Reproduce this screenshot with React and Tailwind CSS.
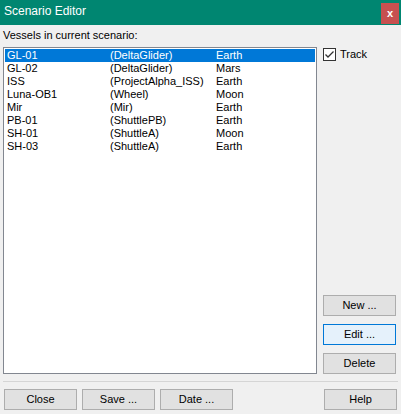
import React from "react";

const vessels = [
  ["GL-01", "(DeltaGlider)", "Earth"],
  ["GL-02", "(DeltaGlider)", "Mars"],
  ["ISS", "(ProjectAlpha_ISS)", "Earth"],
  ["Luna-OB1", "(Wheel)", "Moon"],
  ["Mir", "(Mir)", "Earth"],
  ["PB-01", "(ShuttlePB)", "Earth"],
  ["SH-01", "(ShuttleA)", "Moon"],
  ["SH-03", "(ShuttleA)", "Earth"],
];

function Btn({ children, focused = false, className = "" }) {
  return (
    <button
      className={`h-[21px] w-[73px] border text-[11px] text-black leading-none ${
        focused ? "bg-[#e5f1fb] border-[#0078d7]" : "bg-[#e1e1e1] border-[#adadad]"
      } ${className}`}
    >
      {children}
    </button>
  );
}

export default function App() {
  return (
    <div
      className="w-[401px] h-[414px] bg-[#f0f0f0] flex flex-col overflow-hidden"
      style={{ fontFamily: '"Liberation Sans", Arial, sans-serif' }}
    >
      {/* title bar */}
      <div className="h-[25px] bg-[#008671] flex items-start shrink-0">
        <span className="text-white text-[12px] pl-[4px] pt-[5px] leading-none">Scenario Editor</span>
        <div className="ml-auto mr-[2px] mt-[3px] w-[18px] h-[21px] bg-[#c75050] flex items-center justify-center">
          <span className="text-white text-[11px] font-bold leading-none">x</span>
        </div>
      </div>

      <div className="flex-1 flex flex-col px-[3px]">
        <div className="text-[11px] text-black leading-none mt-[5px] h-[17px]">Vessels in current scenario:</div>

        <div className="flex">
          <div className="w-[314px] h-[327px] border border-[#828790] bg-white p-px">
            {vessels.map(([name, cls, planet], i) => (
              <div
                key={name}
                className={`h-[13px] flex items-center text-[11px] leading-none ${
                  i === 0 ? "bg-[#0078d7] text-white" : "text-black"
                }`}
              >
                <span className="w-[105px] pl-[2px]">{name}</span>
                <span className="w-[106px]">{cls}</span>
                <span>{planet}</span>
              </div>
            ))}
          </div>

          <div className="flex-1 flex flex-col pl-[6px]">
            <label className="flex items-center gap-[4px] mt-px">
              <span className="w-[13px] h-[13px] border border-[#333333] bg-white flex items-center justify-center">
                <svg width="11" height="11" viewBox="0 0 11 11">
                  <path d="M1.5 5.5 L4 8 L9.5 2.5" fill="none" stroke="#333333" strokeWidth="1.3" />
                </svg>
              </span>
              <span className="text-[11px] text-black leading-none">Track</span>
            </label>
            <div className="mt-auto flex flex-col gap-[8px]">
              <Btn>New ...</Btn>
              <Btn focused>Edit ...</Btn>
              <Btn>Delete</Btn>
            </div>
          </div>
        </div>

        <div className="mt-[7px] border-t border-[#d5d5d5]" />

        <div className="flex mt-[7px] pl-px">
          <div className="flex gap-[5px]">
            <Btn>Close</Btn>
            <Btn>Save ...</Btn>
            <Btn>Date ...</Btn>
          </div>
          <Btn className="ml-auto mr-px">Help</Btn>
        </div>
      </div>
    </div>
  );
}
